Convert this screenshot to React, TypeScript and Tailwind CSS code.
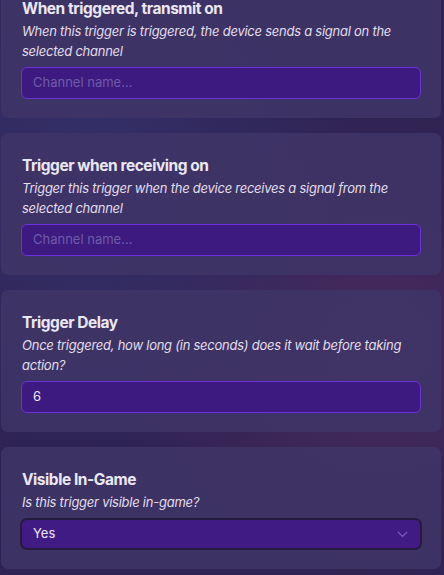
import React from "react";

const font = { fontFamily: "Inter, 'Noto Sans', sans-serif" };

function Card({
  title,
  desc,
  children,
}: {
  title: string;
  desc: string;
  children: React.ReactNode;
}) {
  return (
    <div className="rounded-[7px] bg-[#3f3466]/90 px-5 pt-[22px] pb-[19px]">
      <div className="pl-[1px] text-[15.5px] font-bold leading-[22px] tracking-[-0.45px] text-[#ebe7f3]">{title}</div>
      <div className="mt-[1px] pl-[1px] text-[13px] italic leading-[20px] tracking-[-0.25px] text-[#e2deec]">{desc}</div>
      <div className="mt-[6px]">{children}</div>
    </div>
  );
}

function TextInput({ value, placeholder }: { value?: string; placeholder?: string }) {
  return (
    <div className="flex h-[32px] items-center rounded-[6px] border border-[#6a33d8] bg-[#3c1a7f] px-[11px] text-[13px]">
      {value ? (
        <span className="text-[#ece8f6]">{value}</span>
      ) : (
        <span className="text-[#6f5aa9]">{placeholder}</span>
      )}
    </div>
  );
}

export default function App() {
  return (
    <div
      className="relative h-[575px] w-[444px] overflow-hidden bg-[#2e2352]"
      style={font}
    >
      <div className="pointer-events-none absolute inset-0 bg-[radial-gradient(ellipse_at_20%_30%,#35306a_0%,transparent_55%),radial-gradient(ellipse_at_85%_60%,#4a2a5e_0%,transparent_50%)]" />
      <div className="relative ml-[1px] mt-[-24px] flex w-[440px] flex-col gap-[15px]">
        <Card
          title="When triggered, transmit on"
          desc="When this trigger is triggered, the device sends a signal on the selected channel"
        >
          <TextInput placeholder="Channel name..." />
        </Card>
        <Card
          title="Trigger when receiving on"
          desc="Trigger this trigger when the device receives a signal from the selected channel"
        >
          <TextInput placeholder="Channel name..." />
        </Card>
        <Card
          title="Trigger Delay"
          desc="Once triggered, how long (in seconds) does it wait before taking action?"
        >
          <TextInput value="6" />
        </Card>
        <Card title="Visible In-Game" desc="Is this trigger visible in-game?">
          <div className="-mx-[1px] flex h-[32px] items-center justify-between rounded-[7px] border-2 border-[#241b3e] bg-[#401b83] pl-[11px] pr-[12px] text-[13px] text-[#ece8f6]">
            <span>Yes</span>
            <svg width="11" height="7" viewBox="0 0 11 7" fill="none">
              <path d="M1 1l4.5 4.5L10 1" stroke="#7a5cc0" strokeWidth="1.2" />
            </svg>
          </div>
        </Card>
      </div>
    </div>
  );
}
